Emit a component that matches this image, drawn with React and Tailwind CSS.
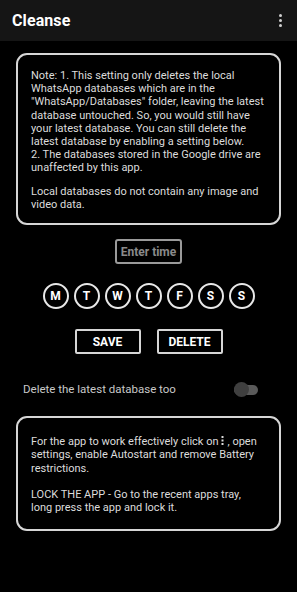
import React from 'react';

const days = ['M', 'T', 'W', 'T', 'F', 'S', 'S'];

const Kebab = () => (
  <svg className="inline-block align-baseline ml-[3px] mr-[3px]" width="3" height="9" viewBox="0 0 3 9">
    <rect x="0.5" y="0" width="2" height="2" fill="#dcdcdc" />
    <rect x="0.5" y="3.5" width="2" height="2" fill="#dcdcdc" />
    <rect x="0.5" y="7" width="2" height="2" fill="#dcdcdc" />
  </svg>
);

const App = () => {
  return (
    <div className="min-h-[592px] w-[297px] bg-black text-[#e0e0e0]" style={{ fontFamily: 'Roboto, "Liberation Sans", sans-serif' }}>
      {/* Toolbar */}
      <header className="h-[41px] bg-[#151515] flex items-center justify-between pl-[12px] pr-[15px]">
        <h1 className="text-[16px] font-bold text-white tracking-[0.1px]">Cleanse</h1>
        <div className="flex flex-col gap-[2px]">
          <span className="w-[3px] h-[3px] rounded-full bg-[#d0d0d0]"></span>
          <span className="w-[3px] h-[3px] rounded-full bg-[#d0d0d0]"></span>
          <span className="w-[3px] h-[3px] rounded-full bg-[#d0d0d0]"></span>
        </div>
      </header>

      <main className="px-[16px] pt-[12px] flex flex-col items-center">
        {/* Note card */}
        <div className="w-full border-2 border-[#d6d6d6] rounded-[11px] pl-[13px] pr-[15px] pt-[14px] pb-[12px] text-[11px] leading-[13.2px] text-[#dcdcdc]">
          <p>
            Note: 1. This setting only deletes the local WhatsApp databases which are in the "WhatsApp/Databases" folder, leaving the latest database untouched. So, you would still have your latest database. You can still delete the latest database by enabling a setting below.
            <br />
            2. The databases stored in the Google drive are unaffected by this app.
          </p>
          <p className="mt-[10px]">Local databases do not contain any image and video data.</p>
        </div>

        {/* Time input */}
        <div className="mt-[14px] w-[67px] h-[25px] border-2 border-[#9a9a9a] rounded-[3px] flex items-center justify-center text-[12px] font-bold text-[#8a8a8a]">
          Enter time
        </div>

        {/* Days */}
        <div className="mt-[19px] flex gap-[5px]">
          {days.map((d, i) => (
            <div key={i} className="w-[26px] h-[26px] rounded-full border-2 border-[#e8e8e8] flex items-center justify-center text-[12px] font-bold text-white">
              {d}
            </div>
          ))}
        </div>

        {/* Buttons */}
        <div className="mt-[20px] flex gap-[16px]">
          <button className="w-[66px] h-[25px] border-2 border-[#d6d6d6] rounded-[2px] text-[12px] font-bold text-white">SAVE</button>
          <button className="w-[66px] h-[25px] border-2 border-[#d6d6d6] rounded-[2px] text-[12px] font-bold text-white">DELETE</button>
        </div>

        {/* Switch row */}
        <div className="mt-[27px] w-full flex items-center justify-between pl-[7px] pr-[23px]">
          <span className="text-[11.5px] text-[#c8c8c8]">Delete the latest database too</span>
          <div className="relative w-[24px] h-[15px] flex items-center">
            <div className="w-full h-[10px] rounded-full bg-[#5a5a5a]"></div>
            <div className="absolute left-0 top-0 w-[15px] h-[15px] rounded-full bg-[#3f3f3f]"></div>
          </div>
        </div>

        {/* Tips card */}
        <div className="mt-[18px] w-full border-2 border-[#d6d6d6] rounded-[11px] pl-[13px] pr-[15px] pt-[17px] pb-[15px] text-[11px] leading-[13.2px] text-[#dcdcdc]">
          <p>For the app to work effectively click on<Kebab />, open settings, enable Autostart and remove Battery restrictions.</p>
          <p className="mt-[13px]">LOCK THE APP - Go to the recent apps tray, long press the app and lock it.</p>
        </div>
      </main>
    </div>
  );
};

export default App;
